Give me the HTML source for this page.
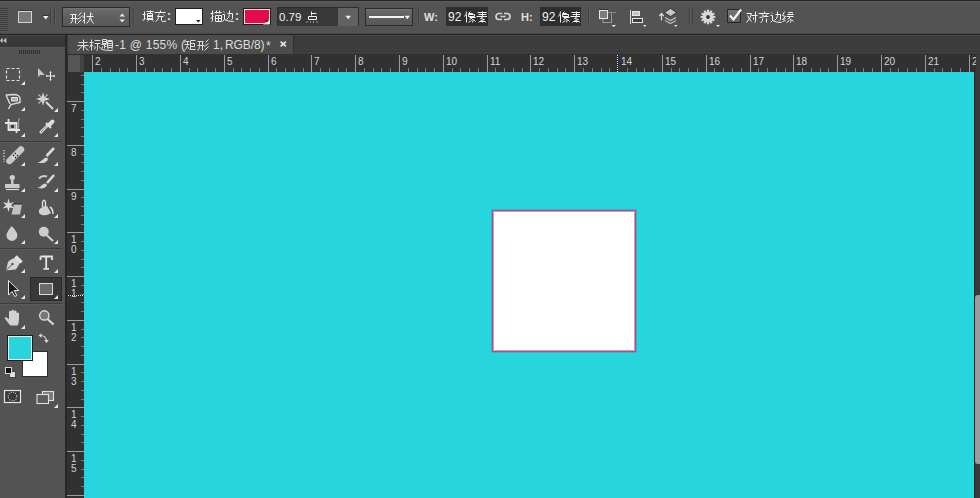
<!DOCTYPE html>
<html><head><meta charset="utf-8">
<style>
*{margin:0;padding:0;box-sizing:border-box}
html,body{width:980px;height:498px;overflow:hidden;background:#535353;font-family:"Liberation Sans",sans-serif;color:#e6e6e6}
.a{position:absolute}
svg{position:absolute;overflow:visible}
.txt{position:absolute;font-size:12px;line-height:14px;color:#e8e8e8;white-space:nowrap}
.cj{display:inline-block;text-align:center;overflow:hidden;vertical-align:top}
.vs{position:absolute;top:8px;width:1px;height:17px;background:#424242}
.vl{position:absolute;top:8px;width:1px;height:17px;background:#5d5d5d}
.fld{position:absolute;top:7px;height:19px;background:#383838;border-top:1px solid #2a2a2a;border-left:1px solid #2e2e2e}
.rl{position:absolute;font-size:10px;line-height:11px;color:#d4d4d4}
.dd{position:absolute;border:1px solid #2b2b2b;background:linear-gradient(#6c6c6c,#606060 45%,#585858);box-shadow:inset 0 1px 0 #727272}
.gl{position:absolute;overflow:visible}
</style></head><body>
<svg width="0" height="0" style="position:absolute;left:0;top:0"><defs><path id="g0" d="M0.5 2.5H6.5M0.5 6.5H7.5M2.5 2.5V7.5Q2.5 10.5 0.5 11.5M5.5 2.5V11.5M11.5 0.5L8.5 3.5M11.5 4.5L7.5 7.5M11.5 7.5L7.5 11.5"/><path id="g1" d="M2.5 0.5V11.5M0.5 3.5L1.5 5.5M0.5 9.5L2.5 7.5M4.5 4.5H11.5M8.5 0.5V4.5Q7.5 9.5 4.5 11.5M8.5 5.5Q9.5 9.5 11.5 11.5M9.5 1.5L10.5 2.5"/><path id="g2" d="M0.5 4.5H3.5M2.5 1.5V9.5M0.5 10.5L3.5 8.5M4.5 1.5H11.5M8.5 0.5V3.5M5.5 3.5H10.5V8.5H5.5ZM5.5 5.5H10.5M5.5 6.5H10.5M4.5 9.5H11.5M6.5 10.5L5.5 11.5M10.5 10.5L11.5 11.5"/><path id="g3" d="M6.5 0.5V2.5M0.5 2.5H11.5M5.5 3.5L3.5 6.5H9.5M9.5 4.5L10.5 5.5M4.5 6.5Q4.5 10.5 1.5 11.5M7.5 6.5V10.5Q7.5 11.5 9.5 11.5H11.5V10.5"/><path id="g4" d="M0.5 3.5H3.5M2.5 0.5V10.5Q2.5 11.5 1.5 11.5M0.5 8.5L3.5 6.5M4.5 2.5H11.5M6.5 0.5V3.5M9.5 0.5V3.5M5.5 5.5H11.5V11.5H5.5ZM8.5 5.5V11.5M5.5 8.5H11.5"/><path id="g5" d="M5.5 3.5H10.5V8.5Q10.5 9.5 9.5 9.5M7.5 0.5V4.5Q7.5 7.5 4.5 9.5M1.5 1.5L2.5 2.5M0.5 4.5H2.5V9.5Q1.5 10.5 0.5 11.5M2.5 9.5Q5.5 11.5 11.5 11.5"/><path id="g6" d="M5.5 0.5V4.5M5.5 2.5H10.5M2.5 5.5H10.5V8.5H2.5ZM1.5 10.5L0.5 11.5M4.5 10.5L4.5 11.5M7.5 10.5L7.5 11.5M10.5 10.5L11.5 11.5"/><path id="g7" d="M2.5 0.5Q2.5 3.5 0.5 5.5M2.5 3.5V11.5M6.5 0.5L4.5 2.5H8.5L7.5 3.5M4.5 3.5H10.5V5.5H4.5ZM5.5 6.5H11.5M8.5 6.5L5.5 8.5M7.5 7.5Q10.5 8.5 8.5 11.5M7.5 9.5L4.5 11.5M9.5 8.5L11.5 10.5"/><path id="g8" d="M6.5 0.5V5.5M1.5 1.5H11.5M2.5 3.5H10.5M0.5 5.5H11.5M7.5 5.5L4.5 7.5L8.5 8.5L3.5 10.5H9.5M6.5 10.5V11.5M3.5 10.5L2.5 11.5M8.5 10.5L9.5 11.5"/><path id="g9" d="M0.5 2.5H5.5Q4.5 7.5 0.5 11.5M1.5 4.5Q3.5 8.5 5.5 10.5M5.5 4.5H11.5M9.5 0.5V10.5Q9.5 11.5 8.5 11.5M7.5 6.5L7.5 8.5"/><path id="g10" d="M6.5 0.5V2.5M0.5 2.5H11.5M3.5 3.5Q6.5 6.5 10.5 5.5M9.5 3.5Q6.5 6.5 1.5 6.5M4.5 7.5V9.5Q4.5 10.5 2.5 11.5M8.5 7.5V11.5"/><path id="g11" d="M2.5 0.5L0.5 4.5L3.5 5.5L0.5 8.5L3.5 7.5M0.5 10.5L3.5 9.5M6.5 1.5H10.5V2.5M5.5 3.5H11.5M6.5 2.5V3.5M4.5 5.5H11.5M8.5 5.5L5.5 8.5M7.5 7.5Q10.5 8.5 8.5 11.5M7.5 9.5L4.5 11.5M9.5 8.5L11.5 10.5"/><path id="g12" d="M1.5 3.5H10.5M0.5 6.5H11.5M6.5 0.5V11.5M5.5 6.5Q3.5 9.5 0.5 11.5M6.5 6.5Q8.5 9.5 11.5 11.5"/><path id="g13" d="M0.5 3.5H4.5M2.5 0.5V11.5M2.5 4.5Q1.5 7.5 0.5 8.5M2.5 5.5L4.5 7.5M5.5 1.5H11.5M5.5 4.5H11.5M8.5 4.5V10.5Q8.5 11.5 7.5 11.5M6.5 7.5L5.5 10.5M10.5 7.5L11.5 9.5"/><path id="g14" d="M1.5 0.5H5.5V4.5H1.5ZM1.5 2.5H5.5M0.5 5.5H5.5M3.5 5.5V9.5M3.5 7.5H5.5M1.5 7.5L0.5 10.5Q4.5 11.5 11.5 11.5M6.5 1.5H11.5M8.5 1.5L8.5 2.5M6.5 2.5H11.5V8.5H6.5ZM6.5 4.5H11.5M6.5 6.5H11.5M7.5 8.5L6.5 10.5M10.5 8.5L11.5 10.5"/><path id="g15" d="M1.5 0.5L0.5 3.5M1.5 2.5H5.5M0.5 5.5H5.5M3.5 2.5V6.5Q2.5 9.5 0.5 11.5M3.5 7.5L5.5 10.5M6.5 1.5H11.5M6.5 1.5V10.5H11.5M6.5 4.5H10.5V7.5H6.5"/></defs></svg>
<!-- ============ options bar ============ -->
<div class="a" style="left:0;top:0;width:980px;height:1px;background:#272727"></div>
<div class="a" style="left:0;top:1px;width:980px;height:2px;background:#595959"></div>
<div class="a" style="left:0;top:33px;width:980px;height:1px;background:#474747"></div>
<div class="a" style="left:0;top:34px;width:980px;height:1px;background:#252525"></div>
<!-- grip -->
<div class="a" style="left:0;top:8px;width:8px;height:24px;background:repeating-linear-gradient(#3a3a3a 0 1px,#5b5b5b 1px 2px)"></div>
<!-- tool preset icon -->
<div class="a" style="left:18px;top:10px;width:14px;height:1px;background:#3a3a3a"></div>
<div class="a" style="left:18px;top:11px;width:14px;height:12px;border:1px solid #d4d4d4;background:#787878"></div>
<svg style="left:43px;top:15px" width="6" height="5"><path d="M0 1H5.5L2.75 4.5Z" fill="#f2f2f2"/><path d="M0 0.5H6" stroke="#333" stroke-width="1"/></svg>
<!-- sep -->
<div class="vs" style="left:50px"></div><div class="vl" style="left:51px"></div>
<div class="vs" style="left:54px"></div><div class="vl" style="left:55px"></div>
<!-- shape dropdown -->
<div class="dd" style="left:62px;top:7px;width:68px;height:20px"></div>
<svg class="gl" style="left:70px;top:12px" width="12" height="12" viewBox="0 0 12 12" preserveAspectRatio="none"><use href="#g0" fill="none" stroke="#f2f2f2" stroke-width="1.0"/></svg><svg class="gl" style="left:82px;top:12px" width="12" height="12" viewBox="0 0 12 12" preserveAspectRatio="none"><use href="#g1" fill="none" stroke="#f2f2f2" stroke-width="1.0"/></svg>
<svg style="left:119px;top:13px" width="7" height="10"><path d="M0.5 3.5L3.25 0.5L6 3.5Z M0.5 6.5H6L3.25 9.2Z" fill="#eee"/></svg>
<div class="vs" style="left:133px"></div><div class="vl" style="left:134px"></div>
<!-- fill -->
<svg class="gl" style="left:142px;top:10px" width="12" height="12" viewBox="0 0 12 12" preserveAspectRatio="none"><use href="#g2" fill="none" stroke="#f2f2f2" stroke-width="1.0"/></svg><svg class="gl" style="left:154px;top:10px" width="12" height="12" viewBox="0 0 12 12" preserveAspectRatio="none"><use href="#g3" fill="none" stroke="#f2f2f2" stroke-width="1.0"/></svg><div class="txt" style="left:167px;top:9px;font-size:12px;color:#e8e8e8;font-weight:bold">:</div>
<div class="a" style="left:175px;top:8px;width:28px;height:17px;border:1px solid #1f1f1f;background:#fff"></div>
<svg style="left:196px;top:20px" width="5" height="3"><path d="M0 0H4.6L2.3 2.6Z" fill="#222"/></svg>
<!-- stroke -->
<svg class="gl" style="left:210px;top:10px" width="12" height="12" viewBox="0 0 12 12" preserveAspectRatio="none"><use href="#g4" fill="none" stroke="#f2f2f2" stroke-width="1.0"/></svg><svg class="gl" style="left:222px;top:10px" width="12" height="12" viewBox="0 0 12 12" preserveAspectRatio="none"><use href="#g5" fill="none" stroke="#f2f2f2" stroke-width="1.0"/></svg><div class="txt" style="left:235px;top:9px;font-size:12px;color:#e8e8e8;font-weight:bold">:</div>
<div class="a" style="left:243px;top:8px;width:28px;height:17px;border:1px solid #1f1f1f;background:#f4dce4"></div>
<div class="a" style="left:245px;top:10px;width:24px;height:13px;background:#e60b4c"></div>
<svg style="left:263px;top:19px" width="7" height="6"><path d="M0 5.5H6.5V0Z" fill="#e8e8e8"/><path d="M1.7 1.2H6L3.85 3.6Z" fill="#222"/></svg>
<!-- stroke width field -->
<div class="fld" style="left:277px;width:61px"></div>
<div class="txt" style="left:279px;top:10px;font-size:11.5px;color:#f0f0f0;">0.79</div><svg class="gl" style="left:306px;top:11px" width="12" height="12" viewBox="0 0 12 12" preserveAspectRatio="none"><use href="#g6" fill="none" stroke="#f2f2f2" stroke-width="1.0"/></svg>
<div class="a" style="left:338px;top:7px;width:21px;height:19px;background:#626262;border-right:1px solid #2e2e2e;border-top:1px solid #2e2e2e"></div>
<svg style="left:345px;top:15px" width="7" height="5"><path d="M0.5 0.8H6L3.25 4.2Z" fill="#f4f4f4"/></svg>
<!-- stroke type dropdown -->
<div class="dd" style="left:365px;top:8px;width:48px;height:18px"></div>
<div class="a" style="left:369px;top:16px;width:35px;height:2px;background:#f4f4f4"></div>
<svg style="left:404px;top:15px" width="7" height="5"><path d="M0.5 0.8H6L3.25 4.2Z" fill="#f0f0f0"/></svg>
<div class="vs" style="left:418px"></div><div class="vl" style="left:419px"></div>
<!-- W/H -->
<div class="txt" style="left:424px;top:10px;font-size:11px;font-weight:bold;color:#e0e0e0">W:</div>
<div class="a" style="left:446px;top:7px;width:42px;height:19px;background:#2e2e2e"></div>
<div class="a" style="left:446px;top:7px;width:41px;height:19px;overflow:hidden"><div class="txt" style="left:2px;top:3px;font-size:12px;color:#f2f2f2;">92</div><svg class="gl" style="left:18px;top:4px" width="12" height="12" viewBox="0 0 12 12" preserveAspectRatio="none"><use href="#g7" fill="none" stroke="#f4f4f4" stroke-width="1.0"/></svg><svg class="gl" style="left:30px;top:4px" width="12" height="12" viewBox="0 0 12 12" preserveAspectRatio="none"><use href="#g8" fill="none" stroke="#f4f4f4" stroke-width="1.0"/></svg></div>
<svg style="left:495px;top:12px" width="16" height="9"><path d="M7 1.5H4A3 3 0 0 0 4 7.5H7 M9 1.5H12A3 3 0 0 1 12 7.5H9 M5.5 4.5H10.5" fill="none" stroke="#d4d4d4" stroke-width="1.7"/></svg>
<div class="txt" style="left:521px;top:10px;font-size:11px;font-weight:bold;color:#e0e0e0">H:</div>
<div class="a" style="left:540px;top:7px;width:41px;height:19px;background:#2e2e2e"></div>
<div class="a" style="left:540px;top:7px;width:40px;height:19px;overflow:hidden"><div class="txt" style="left:2px;top:3px;font-size:12px;color:#f2f2f2;">92</div><svg class="gl" style="left:18px;top:4px" width="12" height="12" viewBox="0 0 12 12" preserveAspectRatio="none"><use href="#g7" fill="none" stroke="#f4f4f4" stroke-width="1.0"/></svg><svg class="gl" style="left:30px;top:4px" width="12" height="12" viewBox="0 0 12 12" preserveAspectRatio="none"><use href="#g8" fill="none" stroke="#f4f4f4" stroke-width="1.0"/></svg></div>
<div class="vs" style="left:588px"></div><div class="vl" style="left:589px"></div>
<!-- path ops icons -->
<svg style="left:594px;top:4px" width="100" height="26">
 <path d="M5 5.5H14" stroke="#333"/>
 <rect x="9" y="8.5" width="8.5" height="10" fill="none" stroke="#9a9a9a"/>
 <path d="M14 8.5H22" stroke="#8a8a8a"/>
 <rect x="5.5" y="6.5" width="8" height="8" fill="#7c7c7c" stroke="#e6e6e6"/>
 <path d="M17.5 21H22L19.75 23Z" fill="#eaeaea"/>
 <path d="M36.5 6V20" stroke="#e0e0e0"/>
 <rect x="38.5" y="7.5" width="7" height="4" fill="#c4c4c4" stroke="#e6e6e6"/>
 <rect x="38.5" y="14.5" width="10" height="4" fill="#3c3c3c" stroke="#e6e6e6"/>
 <path d="M49 21H52.5L50.75 23Z" fill="#eaeaea"/>
 <path d="M67.5 10V16.5M65.2 12.2L67.5 9.5L69.8 12.2" fill="none" stroke="#dcdcdc" stroke-width="1.2"/>
 <path d="M71 16.5L76.5 19.5L82 16.5" fill="none" stroke="#b8b8b8" stroke-width="1.3"/>
 <path d="M71 13.5L76.5 16.5L82 13.5" fill="none" stroke="#c4c4c4" stroke-width="1.3"/>
 <path d="M76.5 4.5L82.5 8.5L76.5 12.5L70.5 8.5Z" fill="#c8c8c8" stroke="#2e2e2e" stroke-width="0.8"/>
 <path d="M80 21H83.5L81.75 23Z" fill="#eaeaea"/>
</svg>
<div class="vs" style="left:689px"></div><div class="vl" style="left:690px"></div>
<div class="vs" style="left:692px"></div>
<!-- gear -->
<svg style="left:694px;top:2px" width="30" height="28">
 <g transform="translate(14 15)"><g fill="#dadada"><rect x="-1.1" y="-7.3" width="2.2" height="14.6" transform="rotate(0)"/><rect x="-1.1" y="-7.3" width="2.2" height="14.6" transform="rotate(30)"/><rect x="-1.1" y="-7.3" width="2.2" height="14.6" transform="rotate(60)"/><rect x="-1.1" y="-7.3" width="2.2" height="14.6" transform="rotate(90)"/><rect x="-1.1" y="-7.3" width="2.2" height="14.6" transform="rotate(120)"/><rect x="-1.1" y="-7.3" width="2.2" height="14.6" transform="rotate(150)"/><circle r="5.4"/></g><circle r="1.9" fill="#333"/></g>
 <path d="M22 23H26L24 25Z" fill="#eaeaea"/>
</svg>
<!-- checkbox -->
<div class="a" style="left:727px;top:9px;width:14px;height:14px;border:1px solid #262626;background:linear-gradient(#767676,#5e5e5e)"></div>
<svg style="left:727px;top:7px" width="16" height="16"><path d="M3 8.5L6.5 12.5L14 2.5" fill="none" stroke="#f6f6f6" stroke-width="2.2"/></svg>
<svg class="gl" style="left:746px;top:11px" width="12" height="12" viewBox="0 0 12 12" preserveAspectRatio="none"><use href="#g9" fill="none" stroke="#f2f2f2" stroke-width="1.0"/></svg><svg class="gl" style="left:758px;top:11px" width="12" height="12" viewBox="0 0 12 12" preserveAspectRatio="none"><use href="#g10" fill="none" stroke="#f2f2f2" stroke-width="1.0"/></svg><svg class="gl" style="left:770px;top:11px" width="12" height="12" viewBox="0 0 12 12" preserveAspectRatio="none"><use href="#g5" fill="none" stroke="#f2f2f2" stroke-width="1.0"/></svg><svg class="gl" style="left:782px;top:11px" width="12" height="12" viewBox="0 0 12 12" preserveAspectRatio="none"><use href="#g11" fill="none" stroke="#f2f2f2" stroke-width="1.0"/></svg>

<!-- ============ tab bar ============ -->
<div class="a" style="left:67px;top:35px;width:913px;height:19px;background:#3b3b3b"></div>
<div class="a" style="left:67px;top:35px;width:913px;height:1px;background:#474747"></div>
<div class="a" style="left:293px;top:49px;width:687px;height:1px;background:#424242"></div><div class="a" style="left:293px;top:52px;width:687px;height:1px;background:#404040"></div>
<div class="a" style="left:68px;top:35px;width:225px;height:19px;background:#4c4c4c"></div><div class="a" style="left:293px;top:35px;width:1px;height:19px;background:#303030"></div>
<svg class="gl" style="left:77px;top:39px" width="12" height="12" viewBox="0 0 12 12" preserveAspectRatio="none"><use href="#g12" fill="none" stroke="#dcdcdc" stroke-width="1.0"/></svg><svg class="gl" style="left:89px;top:39px" width="12" height="12" viewBox="0 0 12 12" preserveAspectRatio="none"><use href="#g13" fill="none" stroke="#dcdcdc" stroke-width="1.0"/></svg><svg class="gl" style="left:101px;top:39px" width="12" height="12" viewBox="0 0 12 12" preserveAspectRatio="none"><use href="#g14" fill="none" stroke="#dcdcdc" stroke-width="1.0"/></svg><div class="txt" style="left:115px;top:38px;font-size:12px;color:#dcdcdc;letter-spacing:0.25px">-1 @ 155% (</div><svg class="gl" style="left:184px;top:39px" width="12" height="12" viewBox="0 0 12 12" preserveAspectRatio="none"><use href="#g15" fill="none" stroke="#dcdcdc" stroke-width="1.0"/></svg><svg class="gl" style="left:197px;top:39px" width="12" height="12" viewBox="0 0 12 12" preserveAspectRatio="none"><use href="#g0" fill="none" stroke="#dcdcdc" stroke-width="1.0"/></svg><div class="txt" style="left:213px;top:38px;font-size:12px;color:#dcdcdc;">1,</div><div class="txt" style="left:225px;top:38px;font-size:12px;color:#dcdcdc;letter-spacing:-0.1px">RGB/8)</div><div class="txt" style="left:266px;top:39px;font-size:12px;color:#dcdcdc;">*</div>
<svg style="left:280px;top:41px" width="7" height="6"><path d="M0.6 0.6L5.9 5.4M5.9 0.6L0.6 5.4" stroke="#ececec" stroke-width="1.5"/></svg>

<!-- ============ tools panel ============ -->
<div class="a" style="left:0;top:35px;width:65px;height:1px;background:#474747"></div><div class="a" style="left:0;top:36px;width:65px;height:11px;background:linear-gradient(#3c3c3c,#363636)"></div><div class="a" style="left:0;top:47px;width:65px;height:1px;background:#5a5a5a"></div>
<svg style="left:0;top:37px" width="8" height="8"><path d="M2.6 0.8L0 3.5L2.6 6.2Z M6.3 0.8L3.2 3.5L6.3 6.2Z" fill="#c8c8c8"/></svg>
<div class="a" style="left:19px;top:50px;width:21px;height:4px;background:repeating-linear-gradient(90deg,#2e2e2e 0 1px,transparent 1px 2px)"></div>
<svg style="left:0;top:0" width="66" height="498" viewBox="0 0 66 498">
 <defs>
  <path id="tri" d="M0 4H4V0Z" fill="#e8e8e8"/>
 </defs>
 <!-- separators -->
 <path d="M0 141.5H62" stroke="#3c3c3c"/><path d="M0 142.5H62" stroke="#5a5a5a"/>
 <path d="M0 248.5H62" stroke="#3c3c3c"/><path d="M0 249.5H62" stroke="#5a5a5a"/>
 <path d="M0 303.5H62" stroke="#3c3c3c"/><path d="M0 304.5H62" stroke="#5a5a5a"/>
 <!-- row1: marquee -->
 <rect x="6.5" y="68.5" width="13" height="12" fill="none" stroke="#e0e0e0" stroke-width="1.2" stroke-dasharray="3 2"/>
 <use href="#tri" x="21" y="81"/>
 <!-- move -->
 <path d="M38 68V77L40.5 75L45 75Z" fill="#c4c4c4"/>
 <path d="M50.5 71.5V80.5M46 76H55" stroke="#eeeeee" stroke-width="1"/>
 <path d="M49.2 72.8H51.8L50.5 71.3Z M49.2 79.2H51.8L50.5 80.7Z M47.3 74.7V77.3L45.8 76Z M53.7 74.7V77.3L55.2 76Z" fill="#eeeeee"/>
 <!-- row2: lasso -->
 <path d="M6 95L13 94.5Q20.5 94.5 20 99.5L20 102.5L11 104.5L8.5 109" fill="none" stroke="#dcdcdc" stroke-width="1.4"/>
 <path d="M11.5 97.5H17.5V101H11.5Z" fill="#b0b0b0" stroke="#e8e8e8"/>
 <path d="M6 95L10 104" stroke="#dcdcdc" stroke-width="1.4"/>
 <use href="#tri" x="21" y="107"/>
 <!-- magic wand -->
 <path d="M43 92L44.3 97.2L50 99L44.3 100.8L43 106L41.7 100.8L36 99L41.7 97.2Z" fill="#e0e0e0"/>
 <path d="M38.5 94.5L43 99L47.5 94.5M38.5 103.5L43 99" fill="none" stroke="#bdbdbd" stroke-width="1.1"/>
 <circle cx="43" cy="99" r="2.6" fill="#d0d0d0"/>
 <path d="M46 102L53 109" stroke="#d8d8d8" stroke-width="2"/>
 <use href="#tri" x="54" y="108"/>
 <!-- row3: crop -->
 <path d="M5 123H16.5V133M8.5 119V130H20" fill="none" stroke="#e6e6e6" stroke-width="1.8"/>
 <rect x="9.5" y="124" width="6" height="5" fill="#bdbdbd"/>
 <circle cx="12.5" cy="126.5" r="1.8" fill="#333"/>
 <path d="M18.5 129V122Q18.5 119 20 118.5" fill="none" stroke="#9a9a9a" stroke-width="1.2"/>
 <use href="#tri" x="21" y="133"/>
 <!-- eyedropper -->
 <path d="M40 133L48 125" stroke="#d8d8d8" stroke-width="2.6"/>
 <path d="M41 132L47.5 125.5" stroke="#4a4a4a" stroke-width="0.9" stroke-dasharray="1 1"/>
 <path d="M46 123L51 128" stroke="#dcdcdc" stroke-width="2.4"/>
 <path d="M49.5 124.5L52.5 121.5" stroke="#dedede" stroke-width="4" stroke-linecap="round"/>
 <use href="#tri" x="54" y="133"/>
 <!-- row4: healing -->
 <path d="M4 150V162" stroke="#d8d8d8" stroke-width="1.3" stroke-dasharray="1.3 1.5"/>
 <path d="M9.5 161L21 149.5" stroke="#c8c8c8" stroke-width="6.5" stroke-linecap="round"/>
 <path d="M12.5 158L17.5 153" stroke="#e4e4e4" stroke-width="4"/>
 <circle cx="13.5" cy="155.5" r="0.9" fill="#333"/><circle cx="15.5" cy="157.5" r="0.9" fill="#333"/><circle cx="15.5" cy="153.5" r="0.9" fill="#333"/><circle cx="17.5" cy="155.5" r="0.9" fill="#333"/>
 <use href="#tri" x="21" y="162"/>
 <!-- brush -->
 <path d="M54 148L46.5 156" stroke="#d8d8d8" stroke-width="2.6"/>
 <path d="M37 162.5Q40 162.5 43 159.5Q45.5 156.5 47.5 158Q49 160 45 162.5Q42 163.5 37 162.5Z" fill="#d4d4d4"/>
 <use href="#tri" x="54" y="162"/>
 <!-- row5: stamp -->
 <circle cx="12.3" cy="177.5" r="2.6" fill="#cfcfcf"/>
 <rect x="11" y="178" width="2.6" height="6" fill="#c4c4c4"/>
 <rect x="5" y="184" width="14.5" height="4" fill="#cacaca"/>
 <path d="M6 189.5H19" stroke="#d8d8d8" stroke-width="1.2"/>
 <use href="#tri" x="21" y="188"/>
 <!-- history brush -->
 <path d="M47 176.5Q42 175 39 178.5" fill="none" stroke="#cfcfcf" stroke-width="2"/>
 <path d="M54 175L47 183" stroke="#d8d8d8" stroke-width="2.6"/>
 <path d="M37.5 187.5Q40 187.5 42 185Q44.5 182.5 46.5 184Q48 186 44 188Q41 189 37.5 187.5Z" fill="#d4d4d4"/>
 <use href="#tri" x="54" y="188"/>
 <!-- row6: eraser -->
 <path d="M8.5 198.5L9.8 203.2L14 202L11 205.2L14.5 208.5L9.8 207.5L8.5 212L7.2 207.5L2.5 208.5L6 205.2L3 202L7.2 203.2Z" fill="#d8d8d8"/>
 <path d="M14 204H22L20 214.5H11.5Z" fill="#c0c0c0"/>
 <path d="M14 204H22" stroke="#222" stroke-width="1"/>
 <use href="#tri" x="21" y="214"/>
 <!-- bucket -->
 <path d="M42.5 207V202Q44 198.5 45.5 202V207" fill="none" stroke="#dcdcdc" stroke-width="1.4"/>
 <path d="M39 210Q38 214 42 215Q47 216 51 213L47 206Q42 206 39 210Z" fill="#d0d0d0"/>
 <path d="M50 207Q53 209 53 214" fill="none" stroke="#d8d8d8" stroke-width="1.6"/>
 <use href="#tri" x="54" y="214"/>
 <!-- row7: blur -->
 <path d="M11.7 226Q17.5 232 17.3 235.5A5.4 5.4 0 0 1 6.5 235.5Q6.5 232 11.7 226Z" fill="#cdcdcd"/>
 <use href="#tri" x="21" y="240"/>
 <!-- dodge -->
 <circle cx="43.8" cy="231.8" r="5" fill="#cdcdcd"/>
 <path d="M47 235.5L53 241" stroke="#d4d4d4" stroke-width="2"/>
 <use href="#tri" x="54" y="240"/>
 <!-- row8: pen -->
 <path d="M6 270.5L8 262Q12 258 16 258L19.5 261.5Q19.5 265.5 15.5 269.5Z" fill="#d4d4d4"/>
 <path d="M15.5 256.5L21.5 262.5" stroke="#e0e0e0" stroke-width="3.5"/>
 <path d="M6 270.5L12 264.5" stroke="#333" stroke-width="0.8"/>
 <circle cx="12.5" cy="264" r="1.1" fill="#333"/>
 <use href="#tri" x="21" y="269"/>
 <!-- type -->
 <path d="M40.5 256.5H52V260M40.5 256.5V260M46.2 256.5V268.8M43.5 268.8H49" fill="none" stroke="#e4e4e4" stroke-width="1.8"/>
 <use href="#tri" x="54" y="269"/>
 <!-- row9: path select -->
 <path d="M8.5 280.5V295L12 291.5L14.8 296.5L16.8 295.5L14.2 290.5H18.8Z" fill="#1e1e1e" stroke="#e8e8e8" stroke-width="1"/>
 <use href="#tri" x="21" y="295"/>
 <!-- rectangle tool selected -->
 <rect x="30.5" y="277.5" width="31" height="23" fill="#383838" stroke="#2a2a2a"/>
 <rect x="39.5" y="283.5" width="13" height="11" fill="#6a6a6a" stroke="#dadada"/>
 <use href="#tri" x="54" y="295"/>
 <!-- row10: hand -->
 <path d="M9 324Q6 320 4.5 318Q5.5 316.5 7.5 318L9 319.5V311.5Q10.3 310 11.5 311.5V316V310.5Q12.8 309 14 310.5V316V311Q15.3 309.8 16.5 311V316.5V313Q17.8 312 19 313V319Q19 323 17.5 325.5H10.5Z" fill="#d2d2d2"/>
 <use href="#tri" x="21" y="325"/>
 <!-- zoom -->
 <circle cx="44.3" cy="315.4" r="4.6" fill="#777" stroke="#dcdcdc" stroke-width="1.4"/>
 <path d="M47.5 319L53.5 324.5" stroke="#d8d8d8" stroke-width="2.2"/>
 <!-- colors -->
 <rect x="22.5" y="351.5" width="25" height="25" fill="#fff" stroke="#2e2e2e"/>
 <rect x="7.5" y="335.5" width="25" height="25" fill="#26d5de" stroke="#1c1c1c"/>
 <rect x="8.5" y="336.5" width="23" height="23" fill="none" stroke="#e6fafa"/>
 <path d="M40.5 335.5Q46 335.5 46.5 341" fill="none" stroke="#d8d8d8" stroke-width="1.2"/>
 <path d="M38.5 335.5L41.5 333.2V337.8Z M44.2 340H48.8L46.5 343Z" fill="#d8d8d8"/>
 <rect x="9.5" y="371.5" width="6" height="6" fill="#e0e0e0" stroke="#444"/>
 <rect x="5.5" y="367.5" width="6" height="6" fill="#111" stroke="#d8d8d8"/>
 <!-- quick mask -->
 <rect x="4.5" y="390.5" width="16" height="12" fill="#3a3a3a" stroke="#e6e6e6" stroke-width="1.2"/>
 <circle cx="12.5" cy="396.5" r="4.3" fill="none" stroke="#e6e6e6" stroke-width="1.1" stroke-dasharray="0.9 1.35"/>
 <!-- screen mode -->
 <rect x="42.5" y="391.5" width="11" height="9" fill="#7a7a7a" stroke="#e0e0e0" stroke-width="1.1"/>
 <rect x="37" y="394.5" width="11.5" height="9" fill="#5c5c5c" stroke="#e0e0e0" stroke-width="1.1"/>
 <use href="#tri" x="54" y="404"/>
</svg>

<div class="a" style="left:65px;top:35px;width:2px;height:463px;background:#272727"></div>

<!-- ============ rulers ============ -->
<div class="a" style="left:67px;top:54px;width:913px;height:18px;background:#313131"></div>
<div class="a" style="left:67px;top:72px;width:17px;height:426px;background:#313131"></div>
<div class="a" style="left:92px;top:55px;width:1px;height:17px;background:#9c9c9c"></div>
<div class="rl" style="left:95px;top:56px">2</div>
<div class="a" style="left:101px;top:68px;width:1px;height:4px;background:#7a7a7a"></div>
<div class="a" style="left:110px;top:68px;width:1px;height:4px;background:#7a7a7a"></div>
<div class="a" style="left:119px;top:68px;width:1px;height:4px;background:#7a7a7a"></div>
<div class="a" style="left:127px;top:68px;width:1px;height:4px;background:#7a7a7a"></div>
<div class="a" style="left:136px;top:55px;width:1px;height:17px;background:#9c9c9c"></div>
<div class="rl" style="left:139px;top:56px">3</div>
<div class="a" style="left:145px;top:68px;width:1px;height:4px;background:#7a7a7a"></div>
<div class="a" style="left:154px;top:68px;width:1px;height:4px;background:#7a7a7a"></div>
<div class="a" style="left:162px;top:68px;width:1px;height:4px;background:#7a7a7a"></div>
<div class="a" style="left:171px;top:68px;width:1px;height:4px;background:#7a7a7a"></div>
<div class="a" style="left:180px;top:55px;width:1px;height:17px;background:#9c9c9c"></div>
<div class="rl" style="left:183px;top:56px">4</div>
<div class="a" style="left:189px;top:68px;width:1px;height:4px;background:#7a7a7a"></div>
<div class="a" style="left:197px;top:68px;width:1px;height:4px;background:#7a7a7a"></div>
<div class="a" style="left:206px;top:68px;width:1px;height:4px;background:#7a7a7a"></div>
<div class="a" style="left:215px;top:68px;width:1px;height:4px;background:#7a7a7a"></div>
<div class="a" style="left:224px;top:55px;width:1px;height:17px;background:#9c9c9c"></div>
<div class="rl" style="left:227px;top:56px">5</div>
<div class="a" style="left:233px;top:68px;width:1px;height:4px;background:#7a7a7a"></div>
<div class="a" style="left:241px;top:68px;width:1px;height:4px;background:#7a7a7a"></div>
<div class="a" style="left:250px;top:68px;width:1px;height:4px;background:#7a7a7a"></div>
<div class="a" style="left:259px;top:68px;width:1px;height:4px;background:#7a7a7a"></div>
<div class="a" style="left:268px;top:55px;width:1px;height:17px;background:#9c9c9c"></div>
<div class="rl" style="left:271px;top:56px">6</div>
<div class="a" style="left:276px;top:68px;width:1px;height:4px;background:#7a7a7a"></div>
<div class="a" style="left:285px;top:68px;width:1px;height:4px;background:#7a7a7a"></div>
<div class="a" style="left:294px;top:68px;width:1px;height:4px;background:#7a7a7a"></div>
<div class="a" style="left:303px;top:68px;width:1px;height:4px;background:#7a7a7a"></div>
<div class="a" style="left:311px;top:55px;width:1px;height:17px;background:#9c9c9c"></div>
<div class="rl" style="left:314px;top:56px">7</div>
<div class="a" style="left:320px;top:68px;width:1px;height:4px;background:#7a7a7a"></div>
<div class="a" style="left:329px;top:68px;width:1px;height:4px;background:#7a7a7a"></div>
<div class="a" style="left:338px;top:68px;width:1px;height:4px;background:#7a7a7a"></div>
<div class="a" style="left:346px;top:68px;width:1px;height:4px;background:#7a7a7a"></div>
<div class="a" style="left:355px;top:55px;width:1px;height:17px;background:#9c9c9c"></div>
<div class="rl" style="left:358px;top:56px">8</div>
<div class="a" style="left:364px;top:68px;width:1px;height:4px;background:#7a7a7a"></div>
<div class="a" style="left:373px;top:68px;width:1px;height:4px;background:#7a7a7a"></div>
<div class="a" style="left:381px;top:68px;width:1px;height:4px;background:#7a7a7a"></div>
<div class="a" style="left:390px;top:68px;width:1px;height:4px;background:#7a7a7a"></div>
<div class="a" style="left:399px;top:55px;width:1px;height:17px;background:#9c9c9c"></div>
<div class="rl" style="left:402px;top:56px">9</div>
<div class="a" style="left:408px;top:68px;width:1px;height:4px;background:#7a7a7a"></div>
<div class="a" style="left:417px;top:68px;width:1px;height:4px;background:#7a7a7a"></div>
<div class="a" style="left:425px;top:68px;width:1px;height:4px;background:#7a7a7a"></div>
<div class="a" style="left:434px;top:68px;width:1px;height:4px;background:#7a7a7a"></div>
<div class="a" style="left:443px;top:55px;width:1px;height:17px;background:#9c9c9c"></div>
<div class="rl" style="left:446px;top:56px">10</div>
<div class="a" style="left:452px;top:68px;width:1px;height:4px;background:#7a7a7a"></div>
<div class="a" style="left:460px;top:68px;width:1px;height:4px;background:#7a7a7a"></div>
<div class="a" style="left:469px;top:68px;width:1px;height:4px;background:#7a7a7a"></div>
<div class="a" style="left:478px;top:68px;width:1px;height:4px;background:#7a7a7a"></div>
<div class="a" style="left:487px;top:55px;width:1px;height:17px;background:#9c9c9c"></div>
<div class="rl" style="left:490px;top:56px">11</div>
<div class="a" style="left:495px;top:68px;width:1px;height:4px;background:#7a7a7a"></div>
<div class="a" style="left:504px;top:68px;width:1px;height:4px;background:#7a7a7a"></div>
<div class="a" style="left:513px;top:68px;width:1px;height:4px;background:#7a7a7a"></div>
<div class="a" style="left:522px;top:68px;width:1px;height:4px;background:#7a7a7a"></div>
<div class="a" style="left:530px;top:55px;width:1px;height:17px;background:#9c9c9c"></div>
<div class="rl" style="left:533px;top:56px">12</div>
<div class="a" style="left:539px;top:68px;width:1px;height:4px;background:#7a7a7a"></div>
<div class="a" style="left:548px;top:68px;width:1px;height:4px;background:#7a7a7a"></div>
<div class="a" style="left:557px;top:68px;width:1px;height:4px;background:#7a7a7a"></div>
<div class="a" style="left:565px;top:68px;width:1px;height:4px;background:#7a7a7a"></div>
<div class="a" style="left:574px;top:55px;width:1px;height:17px;background:#9c9c9c"></div>
<div class="rl" style="left:577px;top:56px">13</div>
<div class="a" style="left:583px;top:68px;width:1px;height:4px;background:#7a7a7a"></div>
<div class="a" style="left:592px;top:68px;width:1px;height:4px;background:#7a7a7a"></div>
<div class="a" style="left:601px;top:68px;width:1px;height:4px;background:#7a7a7a"></div>
<div class="a" style="left:609px;top:68px;width:1px;height:4px;background:#7a7a7a"></div>
<div class="a" style="left:617px;top:55px;width:1px;height:17px;background:repeating-linear-gradient(#e8e8e8 0 1px,#1e1e1e 1px 2px)"></div>
<div class="rl" style="left:621px;top:56px">14</div>
<div class="a" style="left:627px;top:68px;width:1px;height:4px;background:#7a7a7a"></div>
<div class="a" style="left:636px;top:68px;width:1px;height:4px;background:#7a7a7a"></div>
<div class="a" style="left:644px;top:68px;width:1px;height:4px;background:#7a7a7a"></div>
<div class="a" style="left:653px;top:68px;width:1px;height:4px;background:#7a7a7a"></div>
<div class="a" style="left:662px;top:55px;width:1px;height:17px;background:#9c9c9c"></div>
<div class="rl" style="left:665px;top:56px">15</div>
<div class="a" style="left:671px;top:68px;width:1px;height:4px;background:#7a7a7a"></div>
<div class="a" style="left:679px;top:68px;width:1px;height:4px;background:#7a7a7a"></div>
<div class="a" style="left:688px;top:68px;width:1px;height:4px;background:#7a7a7a"></div>
<div class="a" style="left:697px;top:68px;width:1px;height:4px;background:#7a7a7a"></div>
<div class="a" style="left:706px;top:55px;width:1px;height:17px;background:#9c9c9c"></div>
<div class="rl" style="left:709px;top:56px">16</div>
<div class="a" style="left:714px;top:68px;width:1px;height:4px;background:#7a7a7a"></div>
<div class="a" style="left:723px;top:68px;width:1px;height:4px;background:#7a7a7a"></div>
<div class="a" style="left:732px;top:68px;width:1px;height:4px;background:#7a7a7a"></div>
<div class="a" style="left:741px;top:68px;width:1px;height:4px;background:#7a7a7a"></div>
<div class="a" style="left:750px;top:55px;width:1px;height:17px;background:#9c9c9c"></div>
<div class="rl" style="left:753px;top:56px">17</div>
<div class="a" style="left:758px;top:68px;width:1px;height:4px;background:#7a7a7a"></div>
<div class="a" style="left:767px;top:68px;width:1px;height:4px;background:#7a7a7a"></div>
<div class="a" style="left:776px;top:68px;width:1px;height:4px;background:#7a7a7a"></div>
<div class="a" style="left:785px;top:68px;width:1px;height:4px;background:#7a7a7a"></div>
<div class="a" style="left:793px;top:55px;width:1px;height:17px;background:#9c9c9c"></div>
<div class="rl" style="left:796px;top:56px">18</div>
<div class="a" style="left:802px;top:68px;width:1px;height:4px;background:#7a7a7a"></div>
<div class="a" style="left:811px;top:68px;width:1px;height:4px;background:#7a7a7a"></div>
<div class="a" style="left:820px;top:68px;width:1px;height:4px;background:#7a7a7a"></div>
<div class="a" style="left:828px;top:68px;width:1px;height:4px;background:#7a7a7a"></div>
<div class="a" style="left:837px;top:55px;width:1px;height:17px;background:#9c9c9c"></div>
<div class="rl" style="left:840px;top:56px">19</div>
<div class="a" style="left:846px;top:68px;width:1px;height:4px;background:#7a7a7a"></div>
<div class="a" style="left:855px;top:68px;width:1px;height:4px;background:#7a7a7a"></div>
<div class="a" style="left:863px;top:68px;width:1px;height:4px;background:#7a7a7a"></div>
<div class="a" style="left:872px;top:68px;width:1px;height:4px;background:#7a7a7a"></div>
<div class="a" style="left:881px;top:55px;width:1px;height:17px;background:#9c9c9c"></div>
<div class="rl" style="left:884px;top:56px">20</div>
<div class="a" style="left:890px;top:68px;width:1px;height:4px;background:#7a7a7a"></div>
<div class="a" style="left:898px;top:68px;width:1px;height:4px;background:#7a7a7a"></div>
<div class="a" style="left:907px;top:68px;width:1px;height:4px;background:#7a7a7a"></div>
<div class="a" style="left:916px;top:68px;width:1px;height:4px;background:#7a7a7a"></div>
<div class="a" style="left:925px;top:55px;width:1px;height:17px;background:#9c9c9c"></div>
<div class="rl" style="left:928px;top:56px">21</div>
<div class="a" style="left:934px;top:68px;width:1px;height:4px;background:#7a7a7a"></div>
<div class="a" style="left:942px;top:68px;width:1px;height:4px;background:#7a7a7a"></div>
<div class="a" style="left:951px;top:68px;width:1px;height:4px;background:#7a7a7a"></div>
<div class="a" style="left:960px;top:68px;width:1px;height:4px;background:#7a7a7a"></div>
<div class="a" style="left:969px;top:55px;width:1px;height:17px;background:#9c9c9c"></div>
<div class="rl" style="left:972px;top:56px">22</div>
<div class="a" style="left:81px;top:75px;width:3px;height:1px;background:#7a7a7a"></div>
<div class="a" style="left:81px;top:84px;width:3px;height:1px;background:#7a7a7a"></div>
<div class="a" style="left:81px;top:92px;width:3px;height:1px;background:#7a7a7a"></div>
<div class="a" style="left:67px;top:101px;width:17px;height:1px;background:#9c9c9c"></div>
<div class="rl" style="left:71px;top:103px">7</div>
<div class="a" style="left:81px;top:110px;width:3px;height:1px;background:#7a7a7a"></div>
<div class="a" style="left:81px;top:119px;width:3px;height:1px;background:#7a7a7a"></div>
<div class="a" style="left:81px;top:127px;width:3px;height:1px;background:#7a7a7a"></div>
<div class="a" style="left:81px;top:136px;width:3px;height:1px;background:#7a7a7a"></div>
<div class="a" style="left:67px;top:145px;width:17px;height:1px;background:#9c9c9c"></div>
<div class="rl" style="left:71px;top:147px">8</div>
<div class="a" style="left:81px;top:154px;width:3px;height:1px;background:#7a7a7a"></div>
<div class="a" style="left:81px;top:162px;width:3px;height:1px;background:#7a7a7a"></div>
<div class="a" style="left:81px;top:171px;width:3px;height:1px;background:#7a7a7a"></div>
<div class="a" style="left:81px;top:180px;width:3px;height:1px;background:#7a7a7a"></div>
<div class="a" style="left:67px;top:189px;width:17px;height:1px;background:#9c9c9c"></div>
<div class="rl" style="left:71px;top:191px">9</div>
<div class="a" style="left:81px;top:197px;width:3px;height:1px;background:#7a7a7a"></div>
<div class="a" style="left:81px;top:206px;width:3px;height:1px;background:#7a7a7a"></div>
<div class="a" style="left:81px;top:215px;width:3px;height:1px;background:#7a7a7a"></div>
<div class="a" style="left:81px;top:224px;width:3px;height:1px;background:#7a7a7a"></div>
<div class="a" style="left:67px;top:232px;width:17px;height:1px;background:#9c9c9c"></div>
<div class="rl" style="left:71px;top:234px">1</div>
<div class="rl" style="left:71px;top:244px">0</div>
<div class="a" style="left:81px;top:241px;width:3px;height:1px;background:#7a7a7a"></div>
<div class="a" style="left:81px;top:250px;width:3px;height:1px;background:#7a7a7a"></div>
<div class="a" style="left:81px;top:259px;width:3px;height:1px;background:#7a7a7a"></div>
<div class="a" style="left:81px;top:267px;width:3px;height:1px;background:#7a7a7a"></div>
<div class="a" style="left:67px;top:276px;width:17px;height:1px;background:#9c9c9c"></div>
<div class="rl" style="left:71px;top:278px">1</div>
<div class="rl" style="left:71px;top:288px">1</div>
<div class="a" style="left:81px;top:285px;width:3px;height:1px;background:#7a7a7a"></div>
<div class="a" style="left:81px;top:294px;width:3px;height:1px;background:#7a7a7a"></div>
<div class="a" style="left:81px;top:302px;width:3px;height:1px;background:#7a7a7a"></div>
<div class="a" style="left:81px;top:311px;width:3px;height:1px;background:#7a7a7a"></div>
<div class="a" style="left:67px;top:320px;width:17px;height:1px;background:#9c9c9c"></div>
<div class="rl" style="left:71px;top:322px">1</div>
<div class="rl" style="left:71px;top:332px">2</div>
<div class="a" style="left:81px;top:329px;width:3px;height:1px;background:#7a7a7a"></div>
<div class="a" style="left:81px;top:337px;width:3px;height:1px;background:#7a7a7a"></div>
<div class="a" style="left:81px;top:346px;width:3px;height:1px;background:#7a7a7a"></div>
<div class="a" style="left:81px;top:355px;width:3px;height:1px;background:#7a7a7a"></div>
<div class="a" style="left:67px;top:364px;width:17px;height:1px;background:#9c9c9c"></div>
<div class="rl" style="left:71px;top:366px">1</div>
<div class="rl" style="left:71px;top:376px">3</div>
<div class="a" style="left:81px;top:372px;width:3px;height:1px;background:#7a7a7a"></div>
<div class="a" style="left:81px;top:381px;width:3px;height:1px;background:#7a7a7a"></div>
<div class="a" style="left:81px;top:390px;width:3px;height:1px;background:#7a7a7a"></div>
<div class="a" style="left:81px;top:399px;width:3px;height:1px;background:#7a7a7a"></div>
<div class="a" style="left:67px;top:407px;width:17px;height:1px;background:#9c9c9c"></div>
<div class="rl" style="left:71px;top:409px">1</div>
<div class="rl" style="left:71px;top:419px">4</div>
<div class="a" style="left:81px;top:416px;width:3px;height:1px;background:#7a7a7a"></div>
<div class="a" style="left:81px;top:425px;width:3px;height:1px;background:#7a7a7a"></div>
<div class="a" style="left:81px;top:434px;width:3px;height:1px;background:#7a7a7a"></div>
<div class="a" style="left:81px;top:442px;width:3px;height:1px;background:#7a7a7a"></div>
<div class="a" style="left:67px;top:451px;width:17px;height:1px;background:#9c9c9c"></div>
<div class="rl" style="left:71px;top:453px">1</div>
<div class="rl" style="left:71px;top:463px">5</div>
<div class="a" style="left:81px;top:460px;width:3px;height:1px;background:#7a7a7a"></div>
<div class="a" style="left:81px;top:469px;width:3px;height:1px;background:#7a7a7a"></div>
<div class="a" style="left:81px;top:477px;width:3px;height:1px;background:#7a7a7a"></div>
<div class="a" style="left:81px;top:486px;width:3px;height:1px;background:#7a7a7a"></div>
<div class="a" style="left:67px;top:495px;width:17px;height:1px;background:#9c9c9c"></div>
<div class="rl" style="left:71px;top:497px">1</div>
<div class="rl" style="left:71px;top:507px">6</div>
<div class="a" style="left:68px;top:295px;width:16px;height:1px;background:repeating-linear-gradient(90deg,#e8e8e8 0 1px,#1e1e1e 1px 2px)"></div>
<div class="a" style="left:67px;top:54px;width:17px;height:18px;background:#2c2c2c"></div><div class="a" style="left:68px;top:55px;width:12px;height:17px;background:#565656"></div><div class="a" style="left:80px;top:55px;width:4px;height:17px;background:#424242"></div>

<!-- ============ canvas ============ -->
<div class="a" style="left:84px;top:72px;width:890px;height:426px;background:#26d5de"></div>
<div class="a" style="left:492px;top:210px;width:144px;height:142px;background:#fff;border:1px solid #955a8c;box-shadow:inset 0 0 0 1px #e58fb2,0 0 0 1px rgba(120,110,150,0.35)"></div>

<!-- ============ scrollbar ============ -->
<div class="a" style="left:974px;top:72px;width:6px;height:426px;background:#383838;border-left:1px solid #1e1e1e"></div>
<div class="a" style="left:976px;top:54px;width:4px;height:18px;background:#3a3a3a"></div>
<div class="a" style="left:975px;top:295px;width:6px;height:169px;background:#9c9c9c;border-radius:3px 0 0 3px"></div>
</body></html>
